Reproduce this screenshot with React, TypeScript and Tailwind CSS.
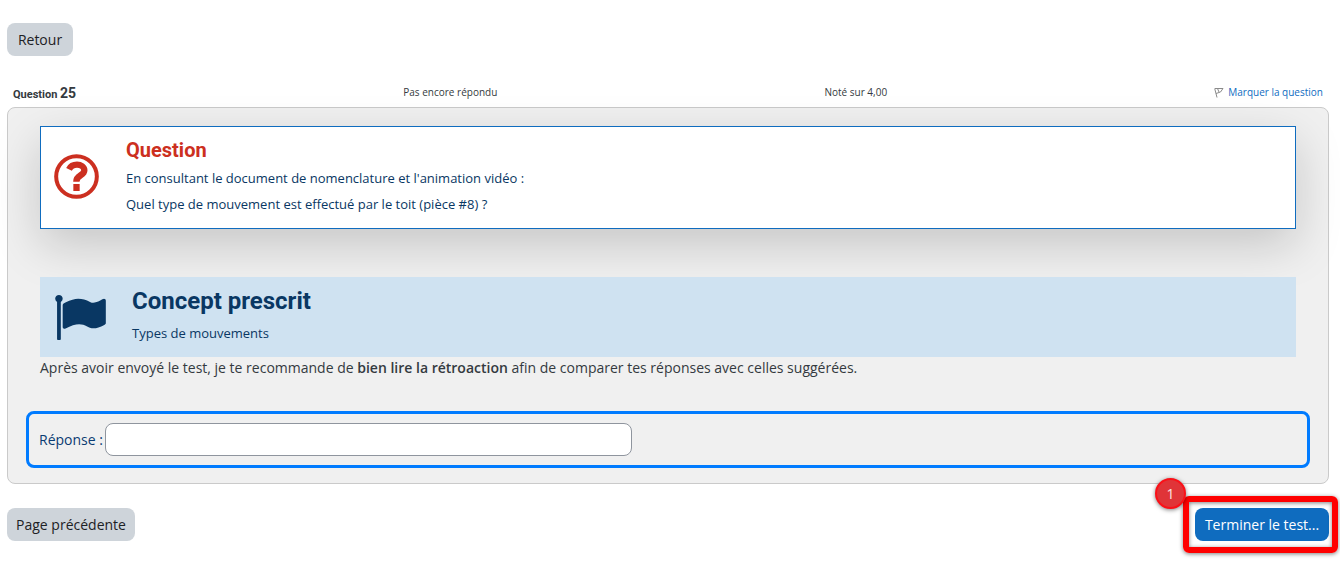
function QuestionIcon() {
  return (
    <svg viewBox="0 0 135 135" className="h-[45px] w-[45px] shrink-0" fill="none" stroke="#cc2f20" aria-hidden="true">
      <circle cx="67.5" cy="67.5" r="61" strokeWidth="12" />
      <path d="M45 46C50 36 57 32 69 32c12 0 22 7 22 17 0 17-24 13-24 34" strokeWidth="19" />
      <path d="M58 90h19v21H58z" fill="#cc2f20" stroke="none" />
    </svg>
  );
}

function FlagIcon() {
  return (
    <svg viewBox="64 128 1728 1536" className="h-[45px] w-[51px] shrink-0" fill="#093763" aria-hidden="true">
      <path d="M320 256q0 72-64 110v1266q0 13-9.5 22.5t-22.5 9.500h-64q-13 0-22.500-9.500t-9.500-22.500v-1266q-64-38-64-110 0-53 37.500-90.500t90.500-37.500 90.500 37.500 37.500 90.500zm1472 64v763q0 25-12.500 38.500t-39.500 27.500q-215 116-369 116-61 0-123.500-22t-108.500-48-115.500-48-142.500-22q-192 0-464 146-17 9-33 9-26 0-45-19t-19-45v-742q0-32 31-55 21-14 79-43 236-120 421-120 107 0 200 29t219 88q38 19 88 19 54 0 117.500-21t110-47 88-47 54.500-21q26 0 45 19t19 45z" />
    </svg>
  );
}

function SmallFlag() {
  return (
    <svg viewBox="0 0 10 11" className="h-[11px] w-[10px]" fill="none" stroke="#8a8a8a" aria-hidden="true">
      <path d="M.7 1.500L3 10.500M1 1.500h8L6.500 5l-4.500 1.500M3.500 1.500l1.500 3.500" />
    </svg>
  );
}

export default function App() {
  return (
    <main className="bg-white pt-[23px] pr-[11px] pb-6 pl-[7px] font-['Open_Sans',sans-serif] text-sm text-[#343a40]">
      <button type="button" className="block h-[33px] w-[66px] rounded-lg bg-[#ced4da] text-[#1d2125]">
        Retour
      </button>

      <div className="mt-7 flex h-[23px] items-start justify-between px-[6px] text-[10px] leading-4">
        <h3 className="font-['Roboto',sans-serif] text-[11px] leading-[18px] font-bold">
          Question <span className="text-sm leading-[18px]">25</span>
        </h3>
        <div>Pas encore répondu</div>
        <div>Noté sur 4,00</div>
        <a href="#marquer" className="flex items-center gap-1 text-[#0f6cbf]">
          <SmallFlag />
          Marquer la question
        </a>
      </div>

      <section className="rounded-lg border border-[#cacaca] bg-[#f0f0f0] px-[18px] pt-[18px] pb-[15px]">
        <div className="px-[14px]">
          <div className="flex items-center gap-[27px] border border-[#0f6cbf] bg-white pt-2 pb-[11px] pl-[13px] text-[#093763] shadow-[0_16px_48px_rgba(0,0,0,0.175)]">
            <QuestionIcon />
            <div className="text-[13px] leading-[26px]">
              <h4 className="font-['Roboto',sans-serif] text-xl leading-[30px] font-bold text-[#cc2f20]">Question</h4>
              <p>En consultant le document de nomenclature et l'animation vidéo :</p>
              <p>Quel type de mouvement est effectué par le toit (pièce #8) ?</p>
            </div>
          </div>

          <div className="relative mt-12 flex h-20 items-center gap-[26px] bg-[#cfe2f1] pl-[15px] text-[#093763]">
            <FlagIcon />
            <div className="text-[13px] leading-8">
              <h4 className="font-['Roboto',sans-serif] text-2xl leading-8 font-bold">Concept prescrit</h4>
              <p>Types de mouvements</p>
            </div>
          </div>
          <p className="leading-[22px]">
            Après avoir envoyé le test, je te recommande de{" "}
            <strong className="font-semibold">bien lire la rétroaction</strong> afin de comparer tes réponses avec
            celles suggérées.
          </p>
        </div>

        <div className="mt-8 flex h-[57px] items-center gap-0.5 rounded-lg border-3 border-[#007bff] px-[10px]">
          <label htmlFor="reponse" className="text-[#0a3b72]">
            Réponse :
          </label>
          <input
            id="reponse"
            type="text"
            className="h-[33px] w-[527px] rounded-lg border border-[#8f959e] bg-white px-3"
          />
        </div>
      </section>

      <div className="mt-6 flex items-start justify-between">
        <button type="button" className="h-[33px] w-32 rounded-lg bg-[#ced4da] text-[#1d2125]">
          Page précédente
        </button>
        <div className="relative">
          <button type="button" className="h-[33px] w-[134px] rounded-lg bg-[#0f6cbf] text-white">
            Terminer le test...
          </button>
          <div className="pointer-events-none absolute -top-3 -right-[9px] -bottom-3 -left-3 rounded-md border-6 border-[#ff0000] shadow-[0_1px_4px_rgba(0,0,0,0.5),inset_0_1px_4px_rgba(0,0,0,0.5)]" />
          <span className="absolute -top-[30px] -left-10 flex size-[31px] items-center justify-center rounded-full border-2 border-[#fb1018] bg-[#e03438] text-sm text-[#fde4e4] shadow-[0_1px_4px_rgba(0,0,0,0.5)]">
            1
          </span>
        </div>
      </div>
    </main>
  );
}
